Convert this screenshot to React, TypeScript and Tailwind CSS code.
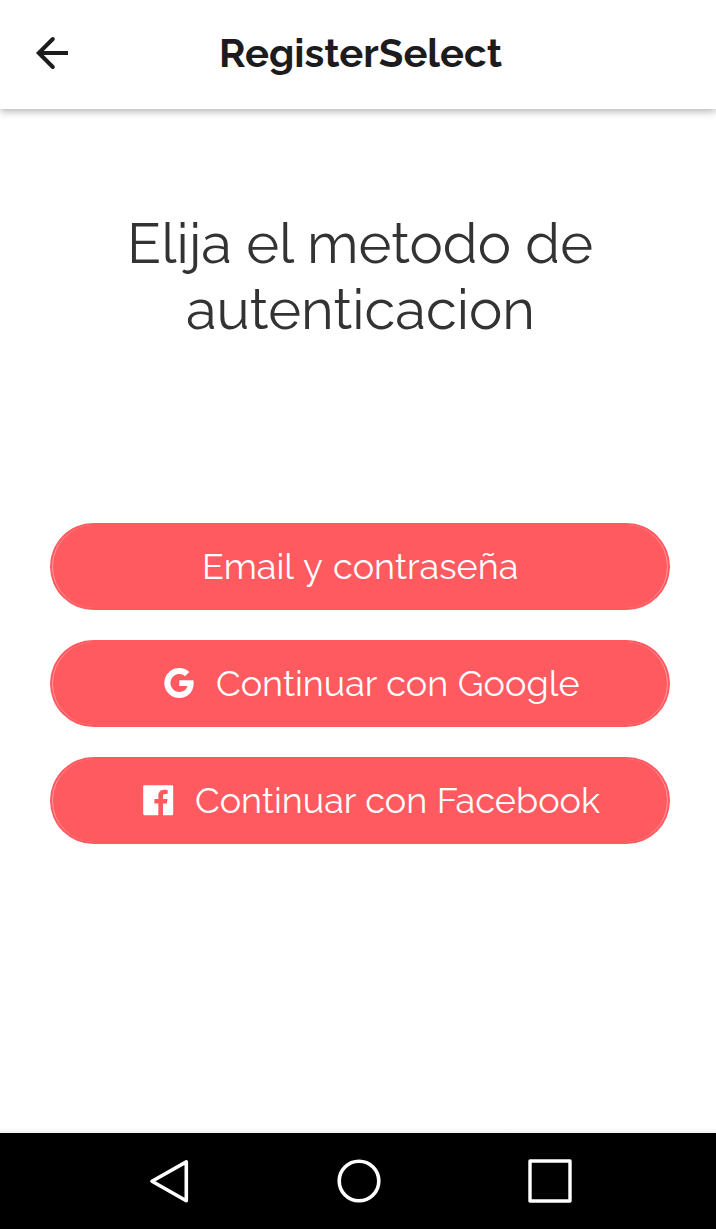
import type { ReactNode } from 'react';
import { AiOutlineGoogle } from 'react-icons/ai';

function FacebookIcon() {
  return (
    <svg viewBox="0 0 1024 1024" className="size-[38.4px] shrink-0" fill="currentColor">
      <path d="M880 112H144c-17.7 0-32 14.3-32 32v736c0 17.7 14.3 32 32 32h736c17.7 0 32-14.3 32-32V144c0-17.7-14.3-32-32-32zm-116.4 233.5h-63.9c-50.1 0-59.8 23.8-59.8 58.8v77.1h119.6l-15.6 120.7h-104V912H515.2V602.2H410.9V481.4h104.3v-89c0-103.3 63.1-159.6 155.3-159.6 44.2 0 82.1 3.3 93.2 4.8v107.9z" />
    </svg>
  );
}

function AuthButton({ children }: { children: ReactNode }) {
  return (
    <button className="relative flex h-[87px] w-full items-center rounded-full bg-[#ff5a60] pb-[2px] text-[36px] leading-[42px] font-normal text-white">
      <span className="pointer-events-none absolute inset-[2px] rounded-full border-x border-[#ff9a9e]" />
      {children}
    </button>
  );
}

export default function App() {
  return (
    <div className="flex h-[1229px] w-[716px] flex-col overflow-hidden bg-white font-['Raleway','Lato',sans-serif]">
      <header className="z-10 flex h-[109px] shrink-0 items-center bg-white pb-[4px] shadow-[0_2px_8px_rgba(0,0,0,0.33)]">
        <button aria-label="Volver" className="ml-[28px] size-12 text-[#1c1c1e]">
          <svg viewBox="0 0 24 24" fill="none" stroke="currentColor" strokeWidth="2" className="size-12">
            <path d="M20 12H5.4" />
            <path d="M12.4 5L5.4 12l7 7" strokeLinecap="round" />
          </svg>
        </button>
        <h1 className="ml-[143px] text-[40px] leading-[48px] font-bold tracking-[0.03px] whitespace-nowrap text-[#1c1c1e]">
          RegisterSelect
        </h1>
      </header>
      <main className="flex grow flex-col pr-[46px] pl-[50px]">
        <h2 className="mt-[101px] flex flex-col text-[56px] leading-[66px] tracking-[0.04px] text-[#333333]">
          <span className="ml-[77px] self-start whitespace-nowrap">Elija el metodo de</span>
          <span className="ml-[136px] self-start whitespace-nowrap">autenticacion</span>
        </h2>
        <div className="mt-[181px] flex flex-col gap-[30px]">
          <AuthButton>
            <span className="ml-[152px] whitespace-nowrap [word-spacing:2.1px]">Email y contraseña</span>
          </AuthButton>
          <AuthButton>
            <AiOutlineGoogle className="ml-[109px] size-[40px] shrink-0" />
            <span className="ml-[17px] whitespace-nowrap [word-spacing:0.4px]">Continuar con Google</span>
          </AuthButton>
          <AuthButton>
            <span className="mt-[2px] ml-[88.8px]"><FacebookIcon /></span>
            <span className="ml-[17.8px] whitespace-nowrap [word-spacing:0.4px]">Continuar con Facebook</span>
          </AuthButton>
        </div>
      </main>
      <div className="h-[6px] shrink-0 bg-linear-to-b from-white to-[#f3f3f3]" />
      <nav className="flex h-[96px] shrink-0 items-center bg-black pl-[147px] text-white">
        <svg viewBox="0 0 48 48" className="size-12" fill="none" stroke="currentColor" strokeWidth="3.6" strokeLinejoin="round">
          <path d="M39.3 4.9v38.8L5 24.2z" />
        </svg>
        <svg viewBox="0 0 48 48" className="ml-[140px] size-12" fill="none" stroke="currentColor" strokeWidth="3.6">
          <circle cx="24" cy="24" r="19.8" />
        </svg>
        <svg viewBox="0 0 48 48" className="ml-[143px] size-12" fill="none" stroke="currentColor" strokeWidth="3.4" strokeLinejoin="round">
          <path d="M4 4h40v40H4z" />
        </svg>
      </nav>
    </div>
  );
}
